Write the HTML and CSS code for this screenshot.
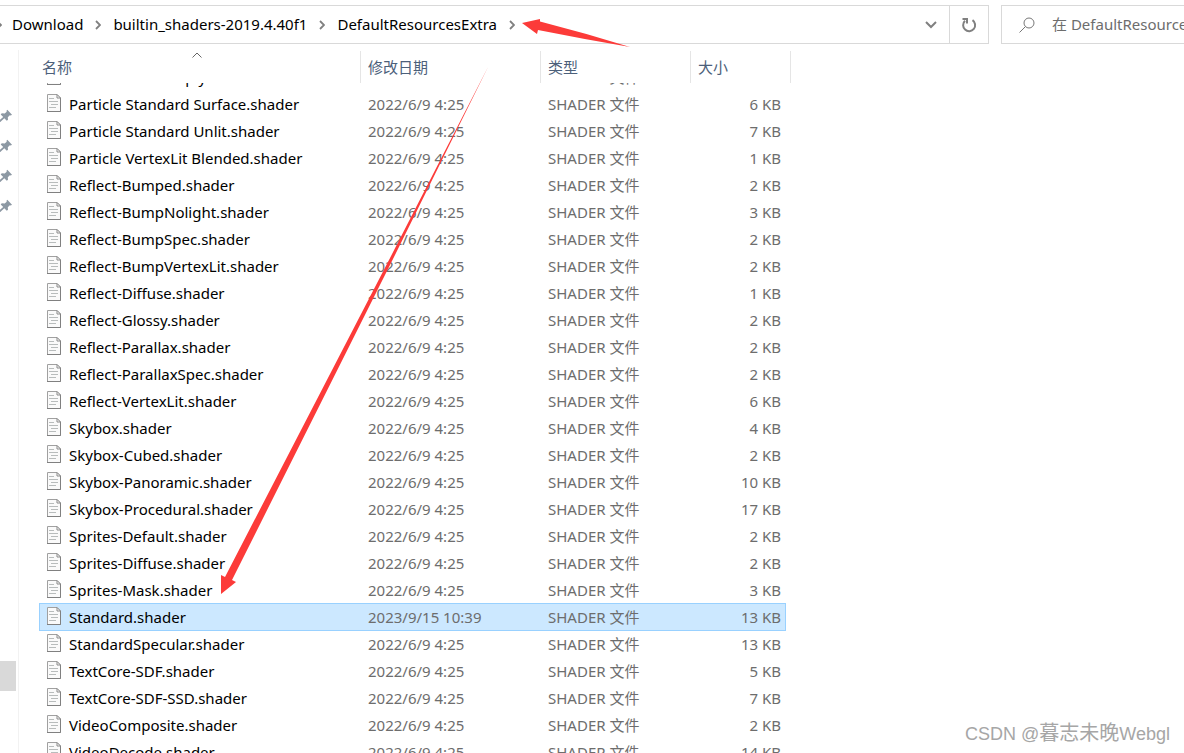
FILE: index.html
```html
<!DOCTYPE html>
<html lang="zh-CN">
<head>
<meta charset="utf-8">
<title>DefaultResourcesExtra</title>
<link rel="stylesheet" href="styles.css">
</head>
<body>
<svg class="defs" aria-hidden="true">
  <symbol id="file" viewBox="0 0 14 18">
    <path d="M.5.5h9.500l3.500 3.500v13.500H.5z" fill="#fafafa" stroke="#a0a0a0"/>
    <path d="M13.500 4v13.500H0" fill="none" stroke="#808080"/>
    <path d="M10 .5V4h3.500z" fill="#fff" stroke="#8a8a8a"/>
    <path d="M2 4.500h5M2 7.500h9M4 10.500h7M2 13.500h7" stroke="#b8bcbc" fill="none"/>
  </symbol>
  <symbol id="pin" viewBox="0 0 14 14">
    <path d="M8.300.8 13 5.700l-1.200.7-1-.2-2 2 .2 2.500-1.200 1.100-2.500-2.500L1.300 13H0v-1.400L4.200 8 1.700 5.500l1.100-1.200 2.900.2 2-1.800-.2-1z" fill="#8c98a3"/>
  </symbol>
  <symbol id="chevron" viewBox="0 0 6 10">
    <path d="M1 1l4 4-4 4" fill="none" stroke="#808080" stroke-width="1.800"/>
  </symbol>
</svg>
<header class="toolbar">
  <nav class="address" aria-label="路径">
    <svg class="sep sep-first"><use href="#chevron"/></svg>
    <a href="#">Download</a>
    <svg class="sep"><use href="#chevron"/></svg>
    <a href="#">builtin_shaders-2019.4.40f1</a>
    <svg class="sep"><use href="#chevron"/></svg>
    <a href="#">DefaultResourcesExtra</a>
    <svg class="sep"><use href="#chevron"/></svg>
    <button class="history" aria-label="历史记录"><svg viewBox="0 0 12 8"><path d="M1 1l5 5 5-5" fill="none" stroke="#808080" stroke-width="2"/></svg></button>
    <button class="refresh" aria-label="刷新"><svg viewBox="0 0 16 16"><path d="M11.500 3.200A6 6 0 1 1 4 3.800" fill="none" stroke="#808080" stroke-width="2"/><path d="M1.500 2H6v4.500" fill="none" stroke="#808080" stroke-width="2"/></svg></button>
  </nav>
  <label class="search">
    <svg viewBox="0 0 16 16"><circle cx="10" cy="6" r="5" fill="none" stroke="#777"/><path d="M6.500 9.500.5 15.500" stroke="#777"/></svg>
    <input type="text" aria-label="搜索" placeholder="在 DefaultResourcesExtra 中搜索">
  </label>
</header>
<main class="content">
  <aside class="sidebar">
    <svg><use href="#pin"/></svg>
    <svg><use href="#pin"/></svg>
    <svg><use href="#pin"/></svg>
    <svg><use href="#pin"/></svg>
    <div class="current"></div>
  </aside>
  <table class="files">
    <thead>
      <tr><th>名称<svg class="sort" viewBox="0 0 10 6"><path d="M.5 5.500 5 1l4.500 4.500" fill="none" stroke="#666"/></svg></th><th>修改日期</th><th>类型</th><th>大小</th></tr>
    </thead>
    <tbody id="rows"></tbody>
  </table>
</main>
<svg class="arrows" aria-hidden="true">
  <path d="M522 23 540 19V21.500Q585 33 630 47 583 39 538 30L537 34z"/>
  <path d="M488 67 393 259 232 580 236 582 221 594V575l4 2L389.500 259z"/>
</svg>
<div class="watermark">CSDN @<span>暮志未晚</span>Webgl</div>
<script src="files.js"></script>
</body>
</html>
```
FILE: styles.css
```css
* { box-sizing: border-box; }
body {
  margin: 0;
  height: 100vh;
  display: flex;
  flex-direction: column;
  overflow: hidden;
  background: #fff;
  color: #000;
  font: 15px/20px "Noto Sans", "Noto Sans CJK SC", sans-serif;
}
.defs { display: none; }
button { border: 0; background: none; padding: 0; display: flex; align-items: center; justify-content: center; }
.toolbar { display: flex; gap: 12px; margin-top: 5px; height: 39px; flex: none; }
.address {
  flex: 1;
  display: flex;
  align-items: center;
  border: 1px solid #d9d9d9;
  border-left: 0;
}
.address a { color: #000; text-decoration: none; padding-bottom: 2px; }
.sep { width: 6px; height: 10px; margin: 0 12px; flex: none; }
.sep-first { margin: 0 10px 0 -4px; }
.history { width: 36px; height: 100%; margin-left: auto; }
.history svg { width: 12px; height: 8px; }
.refresh { width: 39px; height: 100%; border-left: 1px solid #d9d9d9; }
.refresh svg { width: 16px; height: 16px; }
.search {
  width: 183px;
  display: flex;
  align-items: center;
  gap: 17px;
  padding-left: 17px;
  border: 1px solid #d9d9d9;
  border-right: 0;
  overflow: hidden;
}
.search svg { width: 16px; height: 16px; flex: none; }
.search input { flex: 1; min-width: 0; border: 0; padding: 0 0 2px; font: inherit; outline: 0; }
.search input::placeholder { color: #6d6d6d; opacity: 1; }
.content { flex: 1; min-height: 0; display: flex; overflow: hidden; }
.sidebar {
  width: 19px;
  flex: none;
  margin-top: 6px;
  padding-top: 59px;
  border-right: 1px solid #f2f2f2;
}
.sidebar svg { display: block; width: 14px; height: 14px; margin: 0 0 16px -1px; }
.current { width: 16px; height: 30px; margin-top: 448px; background: #d9d9d9; }
.files { display: block; margin-left: 20px; border-spacing: 0; }
.files tr { display: grid; grid-template-columns: 322px 180px 150px 93px; }
.files thead { display: block; padding-top: 7px; }
.files thead tr { grid-template-columns: 322px 180px 150px 100px; }
.files th {
  position: relative;
  height: 32px;
  padding: 6px 0 0 7px;
  border-right: 1px solid #e5e5e5;
  font-weight: 400;
  text-align: left;
  line-height: 20px;
  color: #4c607a;
}
.files th:first-child { padding-left: 3px; }
.sort { position: absolute; left: 153px; top: 1px; width: 10px; height: 6px; }
.files tbody { display: block; overflow: hidden; }
.files tbody tr { height: 27px; border: 1px solid transparent; margin-right: 5px; }
.files tbody tr:first-child { margin-top: -19px; }
.files tbody tr.selected {
  height: 28px;
  margin-top: -1px;
  background: #cce8ff;
  border-color: #99d1ff;
}
.files td { padding: 2px 0 0 6px; color: #6d6d6d; white-space: nowrap; line-height: 20px; }
.files .selected td { padding-top: 3px; }
.files td:first-child { display: flex; gap: 8px; padding-left: 7px; color: #000; }
.files td:last-child { padding-right: 4px; text-align: right; }
.files td svg { width: 14px; height: 18px; flex: none; }
.arrows { position: absolute; inset: 0; width: 100%; height: 100%; fill: #fc3b39; pointer-events: none; }
.watermark {
  position: absolute;
  right: 14px;
  bottom: 6px;
  font: 18px/26px "Liberation Sans", "Noto Sans CJK SC", sans-serif;
  color: #a6a6a6;
}
.watermark span { font-size: 20px; }
```
FILE: files.js
```js
const files = [
  ["Particle Premultiply Blend", 2],
  ["Particle Standard Surface", 6],
  ["Particle Standard Unlit", 7],
  ["Particle VertexLit Blended", 1],
  ["Reflect-Bumped", 2],
  ["Reflect-BumpNolight", 3],
  ["Reflect-BumpSpec", 2],
  ["Reflect-BumpVertexLit", 2],
  ["Reflect-Diffuse", 1],
  ["Reflect-Glossy", 2],
  ["Reflect-Parallax", 2],
  ["Reflect-ParallaxSpec", 2],
  ["Reflect-VertexLit", 6],
  ["Skybox", 4],
  ["Skybox-Cubed", 2],
  ["Skybox-Panoramic", 10],
  ["Skybox-Procedural", 17],
  ["Sprites-Default", 2],
  ["Sprites-Diffuse", 2],
  ["Sprites-Mask", 3],
  ["Standard", 13, "2023/9/15 10:39"],
  ["StandardSpecular", 13],
  ["TextCore-SDF", 5],
  ["TextCore-SDF-SSD", 7],
  ["VideoComposite", 2],
  ["VideoDecode", 14]
];
document.getElementById("rows").innerHTML = files.map(([name, size, date]) =>
  `<tr${date ? ' class="selected"' : ""}><td><svg><use href="#file"/></svg>${name}.shader</td>` +
  `<td>${date || "2022/6/9 4:25"}</td><td>SHADER 文件</td><td>${size} KB</td></tr>`
).join("");
```
